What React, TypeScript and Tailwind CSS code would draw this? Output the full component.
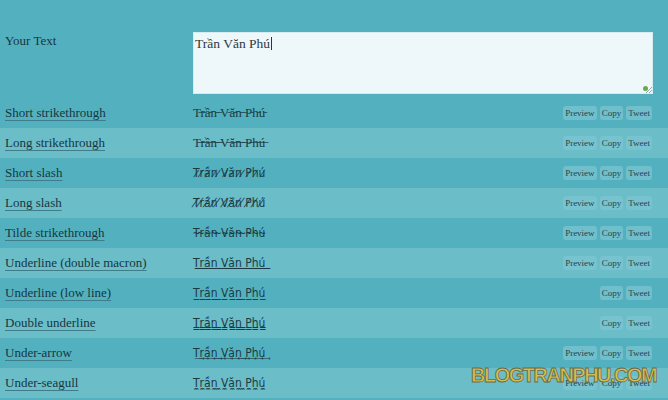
import React from "react";

const base = "Trần Văn Phú";

function mix(text: string, mark: string) {
    return Array.from(text)
        .map((c) => c + mark)
        .join("");
}

interface Row {
    label: string;
    value: string;
    serif?: boolean;
    preview: boolean;
}

const rows: Row[] = [
    { label: "Short strikethrough", value: mix(base, "\u0335"), serif: true, preview: true },
    { label: "Long strikethrough", value: mix(base, "\u0336"), serif: true, preview: true },
    { label: "Short slash", value: mix(base, "\u0337"), preview: true },
    { label: "Long slash", value: mix(base, "\u0338"), preview: true },
    { label: "Tilde strikethrough", value: mix(base, "\u0334"), preview: true },
    { label: "Underline (double macron)", value: mix(base, "\u035F"), preview: true },
    { label: "Underline (low line)", value: mix(base, "\u0332"), preview: false },
    { label: "Double underline", value: mix(base, "\u0333"), preview: false },
    { label: "Under-arrow", value: mix(base, "\u0362"), preview: true },
    { label: "Under-seagull", value: mix(base, "\u033C"), preview: true },
];

function SmallButton({ children }: { children: React.ReactNode }) {
    return (
        <span className="rounded-[3px] bg-[#7cc6d1]/70 px-[2px] py-[1px] text-[9px] leading-[12px] text-[#27434b]">
            {children}
        </span>
    );
}

export default function App() {
    return (
        <div className="relative h-[400px] w-[668px] overflow-hidden bg-[#53b1bf] font-['Liberation_Serif',serif] text-[#173640]">

            {/* Input row */}
            <div className="flex h-[98px] pt-[32px]">
                <div className="w-[193px] pl-[5px] pt-[1px] text-[13px] leading-[16px]">Your Text</div>
                <div className="relative h-[62px] w-[460px] border border-[#d6ecf0] bg-[#eef7fa] px-[1px] pt-[2px] text-[13.5px] leading-[16px] text-[#2b3a3f]">
                    {base}
                    <span className="ml-[1px] inline-block h-[13px] w-px translate-y-[2px] bg-[#333]" />
                    <span className="absolute bottom-[2px] right-[4px] h-[5px] w-[5px] rounded-full bg-[#6aa84f]" />
                    <svg className="absolute bottom-0 right-0" width="7" height="7" viewBox="0 0 7 7">
                        <path d="M7 1 L1 7 M7 4 L4 7" stroke="#9aa" strokeWidth="1" />
                    </svg>
                </div>
            </div>

            {/* Style rows */}
            {rows.map((row, i) => (
                <div
                    key={row.label}
                    className={`flex h-[30px] items-center pr-[16px] ${i % 2 === 1 ? "bg-[#6bbdc8]" : ""}`}
                >
                    <div className="w-[193px] pl-[5px] text-[13px]">
                        <span className="underline decoration-[#3f7d8a] underline-offset-[3px]">{row.label}</span>
                    </div>
                    <div
                        className={`flex-1 text-[#1b3b44] ${row.serif ? "font-['Liberation_Serif',serif] text-[13px]" : "font-['DejaVu_Sans_Condensed','DejaVu_Sans',sans-serif] text-[12px]"}`}
                    >
                        {row.value}
                    </div>
                    <div className="flex items-center gap-[3px]">
                        {row.preview && <SmallButton>Preview</SmallButton>}
                        <SmallButton>Copy</SmallButton>
                        <SmallButton>Tweet</SmallButton>
                    </div>
                </div>
            ))}

            {/* Watermark */}
            <div className="absolute left-[471px] top-[363px] font-['Liberation_Sans',sans-serif] text-[20px] font-bold leading-[24px] tracking-[-1.5px] text-[#d9bf4a] [-webkit-text-stroke:0.8px_#6b6a48]">
                BLOGTRANPHU.COM
            </div>
        </div>
    );
}
